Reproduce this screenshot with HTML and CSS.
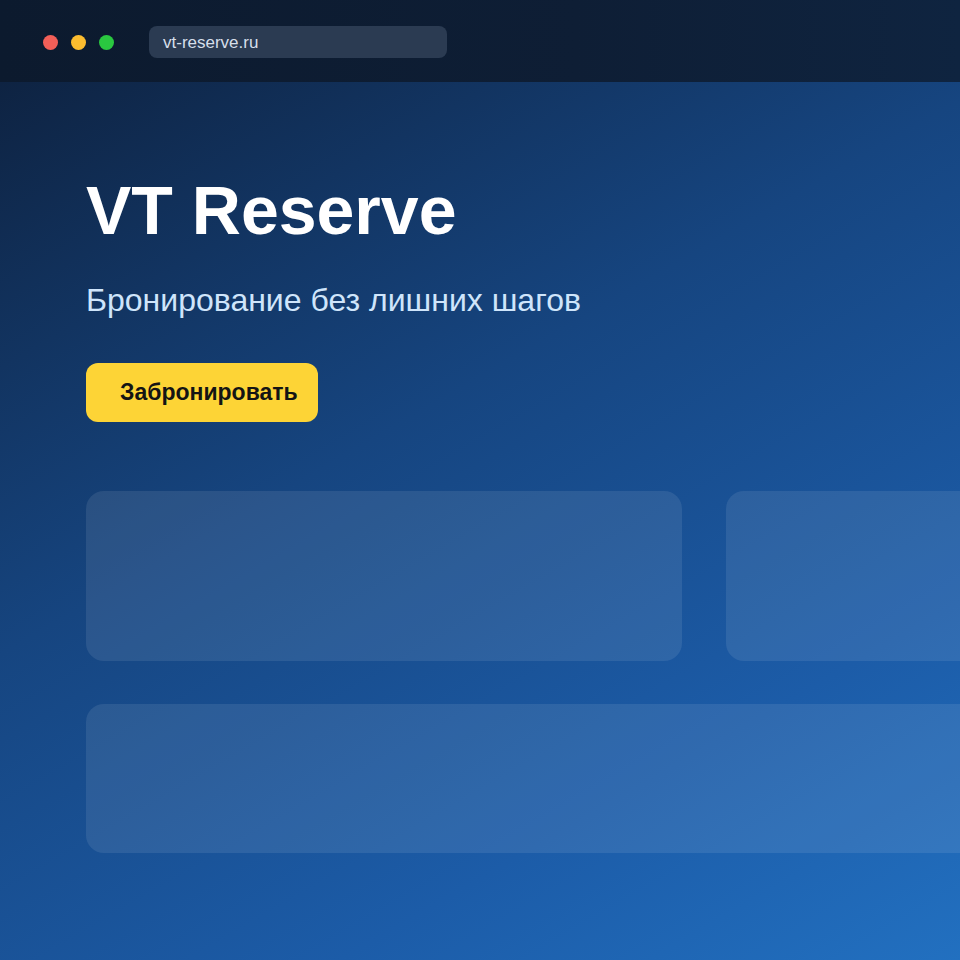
FILE: index.html
```html
<!DOCTYPE html>
<html lang="ru">
<head>
<meta charset="utf-8">
<title>VT Reserve</title>
<link rel="stylesheet" href="styles.css">
</head>
<body>
<div class="window">
  <header class="toolbar">
    <div class="lights">
      <span class="light red"></span>
      <span class="light yellow"></span>
      <span class="light green"></span>
    </div>
    <div class="address">vt-reserve.ru</div>
  </header>
  <main class="page">
    <h1 class="title">VT Reserve</h1>
    <p class="lead">Бронирование без лишних шагов</p>
    <a class="cta" href="#">Забронировать</a>
    <div class="cards">
      <div class="card"></div>
      <div class="card"></div>
    </div>
    <div class="card wide"></div>
  </main>
</div>
</body>
</html>
```

FILE: styles.css
```css
* { box-sizing: border-box; }

html, body {
  margin: 0;
  height: 100%;
}

body {
  font-family: "Liberation Sans", Arial, sans-serif;
  background: #0d1b30;
  overflow: hidden;
}

.window {
  width: 960px;
  height: 960px;
  display: flex;
  flex-direction: column;
  overflow: hidden;
}

.toolbar {
  flex: 0 0 82px;
  display: flex;
  align-items: center;
  gap: 35px;
  padding: 2px 0 0 43px;
  background: linear-gradient(90deg, #0c1a2e 0%, #0e1e35 60%, #0f2440 100%);
}

.lights {
  display: flex;
  gap: 13px;
}

.light {
  width: 15px;
  height: 15px;
  border-radius: 50%;
}
.light.red { background: #f25f58; }
.light.yellow { background: #fbbc2f; }
.light.green { background: #2ac840; }

.address {
  width: 298px;
  height: 32px;
  border-radius: 8px;
  background: #2b3b52;
  color: #d6dfea;
  font-size: 17px;
  line-height: 33px;
  padding-left: 14px;
}

.page {
  flex: 1;
  padding: 88px 0 0 86px;
  background: linear-gradient(150deg, #0e2342 0%, #164580 40%, #1c5ca8 75%, #2270c0 100%);
  overflow: hidden;
}

.title {
  margin: 0;
  color: #ffffff;
  font-size: 68px;
  font-weight: 700;
  line-height: 80px;
}

.lead {
  margin: 31px 0 0;
  color: #cfe5fb;
  font-size: 32px;
  line-height: 38px;
}

.cta {
  display: inline-flex;
  align-items: center;
  margin-top: 44px;
  height: 59px;
  padding: 0 20px 0 34px;
  border-radius: 12px;
  background: #fdd436;
  color: #141414;
  font-size: 23px;
  font-weight: 700;
  text-decoration: none;
}

.cards {
  display: grid;
  grid-template-columns: 596px 596px;
  gap: 44px;
  margin-top: 69px;
}

.card {
  height: 170px;
  border-radius: 18px;
  background: rgba(255, 255, 255, 0.09);
}

.card.wide {
  margin-top: 43px;
  height: 149px;
  width: 1000px;
}
```
